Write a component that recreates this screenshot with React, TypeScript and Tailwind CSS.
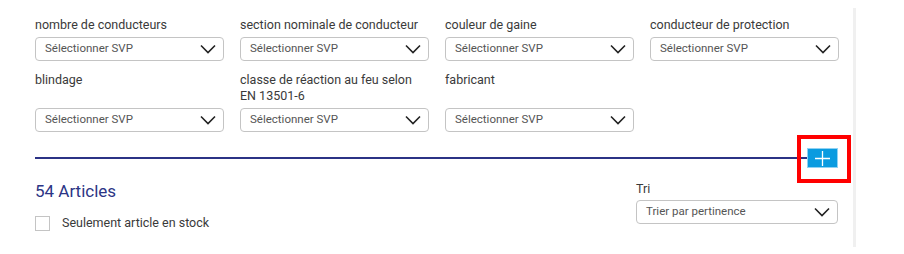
import React from "react";

const filters = [
  "nombre de conducteurs",
  "section nominale de conducteur",
  "couleur de gaine",
  "conducteur de protection",
  "blindage",
  "classe de réaction au feu selon EN 13501-6",
  "fabricant",
];

// Chevron used inside every dropdown
const Chevron = () => (
  <svg width="16" height="10" viewBox="0 0 16 10" fill="none">
    <path d="M1 1.5 L8 8.5 L15 1.5" stroke="#222" strokeWidth="1.6" />
  </svg>
);

const SelectBox: React.FC<{ value: string; className?: string }> = ({
  value,
  className = "",
}) => (
  <div
    className={`flex items-center justify-between border border-[#c4c4c4] rounded-[4px] pl-[9px] pr-[7px] bg-white ${className}`}
  >
    <span className="text-[11.5px] text-[#555]">{value}</span>
    <Chevron />
  </div>
);

export default function App() {
  return (
    <div className="flex w-[904px] h-[254px] bg-white font-['Roboto',sans-serif]">
      <div className="w-[853px] shrink-0 pl-[35px] pr-[14px] pt-[17px]">
        {/* filter grid */}
        <div className="grid grid-cols-4 gap-x-4 gap-y-[11px]">
          {filters.map((label) => (
            <div key={label} className="flex flex-col justify-between">
              <div className="text-[12.5px] leading-4 text-[#3a3a3a] mb-1">
                {label}
              </div>
              <SelectBox value="Sélectionner SVP" className="h-6" />
            </div>
          ))}
        </div>

        {/* divider with expand button */}
        <div className="flex items-center mt-4 h-5">
          <div className="flex-1 h-[2px] bg-[#2b3285]" />
          <div className="relative mr-px">
            <button className="flex items-center justify-center w-[31px] h-5 bg-[#0a9be0] border border-[#8fd2f3]">
              <svg width="17" height="17" viewBox="0 0 17 17">
                <path d="M8.5 1 V16 M1 8.5 H16" stroke="#fff" strokeWidth="1.3" />
              </svg>
            </button>
            <div className="absolute -left-[10px] -right-[13px] -top-[13px] -bottom-[15px] border-4 border-[#f00] pointer-events-none" />
          </div>
        </div>

        {/* results header */}
        <div className="flex justify-between">
          <div className="mt-3">
            <div className="text-[17px] leading-[22px] text-[#2c3585]">54 Articles</div>
            <label className="flex items-center mt-3">
              <span className="w-[15px] h-[15px] border border-[#c4c4c4] bg-white" />
              <span className="ml-3 text-[12.5px] text-[#3a3a3a]">Seulement article en stock</span>
            </label>
          </div>
          <div className="w-[202px] mt-[13px] mr-px">
            <div className="text-[12.5px] leading-4 text-[#3a3a3a] mb-[3px]">Tri</div>
            <SelectBox value="Trier par pertinence" className="h-6" />
          </div>
        </div>
      </div>
      <div className="w-[3px] mt-2 mb-[7px] bg-[#f0f0f0]" />
    </div>
  );
}
